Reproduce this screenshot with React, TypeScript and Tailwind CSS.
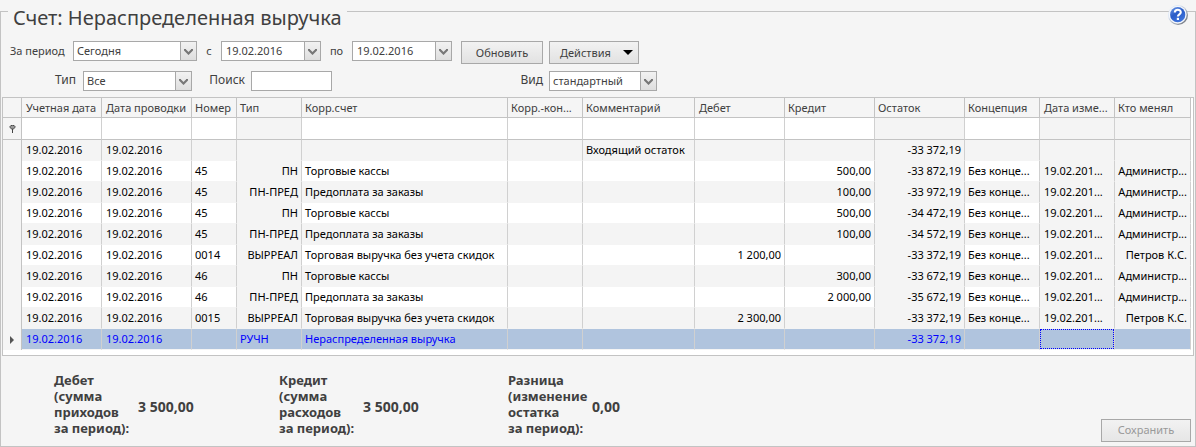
import type { ReactNode } from "react";

type Row = {
  no?: string;
  type?: string;
  account?: string;
  comment?: string;
  debit?: string;
  credit?: string;
  balance: string;
  user?: string;
  selected?: boolean;
};

const rows: Row[] = [
  { comment: "Входящий остаток", balance: "-33 372,19" },
  { no: "45", type: "ПН", account: "Торговые кассы", credit: "500,00", balance: "-33 872,19", user: "Администр..." },
  { no: "45", type: "ПН-ПРЕД", account: "Предоплата за заказы", credit: "100,00", balance: "-33 972,19", user: "Администр..." },
  { no: "45", type: "ПН", account: "Торговые кассы", credit: "500,00", balance: "-34 472,19", user: "Администр..." },
  { no: "45", type: "ПН-ПРЕД", account: "Предоплата за заказы", credit: "100,00", balance: "-34 572,19", user: "Администр..." },
  { no: "0014", type: "ВЫРРЕАЛ", account: "Торговая выручка без учета скидок", debit: "1 200,00", balance: "-33 372,19", user: "Петров К.С." },
  { no: "46", type: "ПН", account: "Торговые кассы", credit: "300,00", balance: "-33 672,19", user: "Администр..." },
  { no: "46", type: "ПН-ПРЕД", account: "Предоплата за заказы", credit: "2 000,00", balance: "-35 672,19", user: "Администр..." },
  { no: "0015", type: "ВЫРРЕАЛ", account: "Торговая выручка без учета скидок", debit: "2 300,00", balance: "-33 372,19", user: "Петров К.С." },
  { type: "РУЧН", account: "Нераспределенная выручка", balance: "-33 372,19", selected: true },
];

const columns = [
  { title: "Учетная дата", width: "w-[80px]", pad: "pl-1" },
  { title: "Дата проводки", width: "w-[90px]", pad: "pl-1" },
  { title: "Номер", width: "w-[45px]", pad: "pl-[3px]" },
  { title: "Тип", width: "w-[65px]", pad: "pl-[3px]", locked: true },
  { title: "Корр.счет", width: "", pad: "pl-[3px]" },
  { title: "Корр.-кон...", width: "w-[75px]", pad: "pl-[3px]" },
  { title: "Комментарий", width: "w-[112px]", pad: "pl-[3px]" },
  { title: "Дебет", width: "w-[90px]", pad: "pl-1" },
  { title: "Кредит", width: "w-[90px]", pad: "pl-[3px]" },
  { title: "Остаток", width: "w-[90px]", pad: "pl-[3px]", locked: true },
  { title: "Концепция", width: "w-[75px]", pad: "pl-[3px]" },
  { title: "Дата изме...", width: "w-[75px]", pad: "pl-1", locked: true },
  { title: "Кто менял", width: "w-[76px]", pad: "pl-[3px]", locked: true },
];

const totals = [
  { lines: ["Дебет", "(сумма", "приходов", "за период):"], value: "3 500,00", width: "w-[225px]" },
  { lines: ["Кредит", "(сумма", "расходов", "за период):"], value: "3 500,00", width: "w-[229px]" },
  { lines: ["Разница", "(изменение", "остатка", "за период):"], value: "0,00", width: "w-[225px]" },
];

function Chevron() {
  return (
    <svg width="9" height="7" viewBox="0 0 9 7" fill="none" stroke="#777" strokeWidth="2.2">
      <path d="M1 1v1l3.500 3.500L8 2V1" />
    </svg>
  );
}

const arrowBox = "flex w-4 shrink-0 items-center justify-center border-l border-[#a8a8a8] bg-linear-to-b from-[#f2f2f2] to-[#dedede]";

function Select({ id, value, className }: { id: string; value: string; className: string }) {
  return (
    <div className={`relative flex h-5 border border-[#a8a8a8] bg-white ${className}`}>
      <select id={id} className="min-w-0 flex-1 appearance-none bg-transparent pl-[3px] text-[11px] leading-[18px] outline-none">
        <option>{value}</option>
      </select>
      <span className={`pointer-events-none ${arrowBox}`}>
        <Chevron />
      </span>
    </div>
  );
}

function DateBox({ id, value }: { id: string; value: string }) {
  return (
    <div className="flex h-5 w-[100px] border border-[#a8a8a8] bg-white">
      <input id={id} defaultValue={value} className="min-w-0 flex-1 pl-1 text-[11px] outline-none" />
      <button type="button" aria-label="Выбрать дату" className={arrowBox}>
        <Chevron />
      </button>
    </div>
  );
}

type CellProps = { children?: ReactNode; right?: boolean; date?: boolean; locked?: boolean; row: Row; odd: boolean };

function Cell({ children, right, date, locked, row, odd }: CellProps) {
  const bg = row.selected ? "bg-[#b0c4de]" : locked || !odd ? "bg-[#f4f4f4]" : "bg-white";
  return (
    <td
      className={`h-[21px] overflow-hidden border-r border-b border-r-[#d0d0d0] border-b-[#f4f4f4] pr-[3px] whitespace-nowrap ${
        date ? "pl-1" : "pl-[3px]"
      } ${right ? "text-right" : ""} ${bg}`}
    >
      {children}
    </td>
  );
}

function HelpIcon() {
  return (
    <svg width="22" height="22" viewBox="0 0 22 22">
      <defs>
        <linearGradient id="help-rim" x1="0" y1="0" x2="1" y2="1">
          <stop offset="0.3" stopColor="#dbe6f6" />
          <stop offset="1" stopColor="#5c6068" />
        </linearGradient>
        <linearGradient id="help-fill" x1="0" y1="0" x2="0.6" y2="1">
          <stop offset="0" stopColor="#6f9ae6" />
          <stop offset="0.5" stopColor="#2a5cc8" />
          <stop offset="1" stopColor="#3f74dc" />
        </linearGradient>
      </defs>
      <circle cx="11" cy="11" r="10" fill="url(#help-rim)" />
      <circle cx="10.700" cy="10.700" r="9" fill="#f4f7fc" />
      <circle cx="10.700" cy="10.700" r="7.600" fill="url(#help-fill)" />
      <path d="M7.800 8.600c0-3.700 6-3.600 6-.3 0 2.200-2.900 2-2.900 4.300" fill="none" stroke="#fff" strokeWidth="2.100" />
      <rect x="9.800" y="13.800" width="2.200" height="2.200" fill="#fff" />
    </svg>
  );
}

export default function App() {
  return (
    <div className="relative min-h-screen bg-[#f5f5f5] font-['Noto_Sans','Open_Sans',sans-serif] text-[11px] text-[#404040]">
      <fieldset className="min-w-0 border border-[#c3c3c3] px-px pb-1">
        <legend className="ml-[6px] h-[22px] px-[5px] text-[20px] leading-9 whitespace-nowrap">Счет: Нераспределенная выручка</legend>

        <div className="flex items-start pt-[19px] pl-2 leading-5">
          <label htmlFor="period" className="w-[63px]">За период</label>
          <Select id="period" value="Сегодня" className="w-[124px]" />
          <label htmlFor="from" className="w-6 text-center">с</label>
          <DateBox id="from" value="19.02.2016" />
          <label htmlFor="to" className="w-[31px] text-center">по</label>
          <DateBox id="to" value="19.02.2016" />
          <button type="button" className="ml-[9px] h-[23px] w-[82px] border border-[#a8a8a8] bg-linear-to-b from-[#f2f2f2] to-[#e2e2e2]">
            Обновить
          </button>
          <button type="button" className="ml-[6px] flex h-[23px] w-[90px] items-center justify-between border border-[#a8a8a8] bg-linear-to-b from-[#f2f2f2] to-[#e2e2e2] pr-[5px] pl-[10px]">
            Действия
            <svg width="10" height="5" viewBox="0 0 10 5"><path d="M0 0h10L5 5z" fill="#000" /></svg>
          </button>
        </div>

        <div className="flex items-start pt-[7px] pl-[53px] text-[12px] leading-[18px]">
          <label htmlFor="type" className="w-7">Тип</label>
          <Select id="type" value="Все" className="w-[109px]" />
          <label htmlFor="search" className="w-[59px] pr-[6px] text-right">Поиск</label>
          <input id="search" className="h-5 w-[81px] border border-[#a8a8a8] bg-white px-1 text-[11px] outline-none" />
          <label htmlFor="view" className="w-[217px] pr-[6px] text-right">Вид</label>
          <Select id="view" value="стандартный" className="w-[108px]" />
        </div>

        <div className="mt-[6px] border border-[#c3c3c3] bg-white pr-[2px] pb-[5px]">
          <table className="w-full table-fixed border-separate border-spacing-0 leading-4">
            <colgroup>
              <col className="w-[19px]" />
              {columns.map((c) => (
                <col key={c.title} className={c.width} />
              ))}
            </colgroup>
            <thead>
              <tr>
                <th aria-label="Строка" className="h-5 border-r border-b border-[#c3c3c3] bg-[#f5f5f5]" />
                {columns.map((c) => (
                  <th key={c.title} className={`h-5 overflow-hidden border-r border-b border-[#c3c3c3] bg-[#f5f5f5] text-left font-normal whitespace-nowrap ${c.pad}`}>
                    {c.title}
                  </th>
                ))}
              </tr>
            </thead>
            <tbody className="text-black">
              <tr>
                <td className="h-[22px] border-r border-b border-[#c3c3c3] bg-[#f5f5f5]">
                  <svg className="mx-auto" width="7" height="8" viewBox="0 0 7 8">
                    <path d="M1 1.500C1 0 6 0 6 1.500S5 4 3.500 4 1 3 1 1.500zM3.500 4v4" fill="#999" stroke="#444" />
                  </svg>
                </td>
                {columns.map((c) => (
                  <td key={c.title} className={`h-[22px] border-r border-b border-r-[#d0d0d0] border-b-[#c3c3c3] ${c.locked ? "bg-[#f4f4f4]" : "bg-white"}`} />
                ))}
              </tr>
              {rows.map((row, i) => {
                const p = { row, odd: i % 2 === 1 };
                return (
                  <tr key={i} className={row.selected ? "text-[#0000ff]" : ""}>
                    <td className="h-[21px] border-r border-[#c3c3c3] bg-[#f5f5f5]">
                      {row.selected ? (
                        <svg className="mx-auto" width="4" height="8" viewBox="0 0 4 8"><path d="M0 0l4 4-4 4z" fill="#555" /></svg>
                      ) : null}
                    </td>
                    <Cell {...p} date>19.02.2016</Cell>
                    <Cell {...p} date>19.02.2016</Cell>
                    <Cell {...p}>{row.no}</Cell>
                    <Cell {...p} locked right={!row.selected}>{row.type}</Cell>
                    <Cell {...p}>{row.account}</Cell>
                    <Cell {...p} />
                    <Cell {...p}>{row.comment}</Cell>
                    <Cell {...p} right>{row.debit}</Cell>
                    <Cell {...p} right>{row.credit}</Cell>
                    <Cell {...p} locked right>{row.balance}</Cell>
                    <Cell {...p}>{row.user ? "Без конце..." : null}</Cell>
                    {row.selected ? (
                      <td className="h-[21px] border-r border-b border-r-[#d0d0d0] border-b-[#f4f4f4] bg-[#b0c4de] p-0">
                        <div className="h-5 border border-dotted border-[#0000ff]" />
                      </td>
                    ) : (
                      <Cell {...p} date locked>{row.user ? "19.02.201..." : null}</Cell>
                    )}
                    <Cell {...p} locked right>{row.user}</Cell>
                  </tr>
                );
              })}
            </tbody>
          </table>
        </div>

        <div className="flex items-end justify-between pr-[3px]">
          <div className="flex pt-4 pb-[6px] pl-[52px] text-[13px] leading-4 font-bold">
            {totals.map((t) => (
              <div key={t.lines[0]} className={`flex items-center ${t.width}`}>
                <div className="w-[84px] whitespace-nowrap">
                  {t.lines.map((line) => (
                    <div key={line}>{line}</div>
                  ))}
                </div>
                <div className="pt-[6px] text-[14px]">{t.value}</div>
              </div>
            ))}
          </div>
          <button type="button" disabled className="h-[23px] w-[90px] border border-[#a8a8a8] bg-linear-to-b from-[#f2f2f2] to-[#e6e6e6] text-[#999]">
            Сохранить
          </button>
        </div>
      </fieldset>

      <button type="button" aria-label="Справка" className="absolute top-1 right-[7px]">
        <HelpIcon />
      </button>
    </div>
  );
}
